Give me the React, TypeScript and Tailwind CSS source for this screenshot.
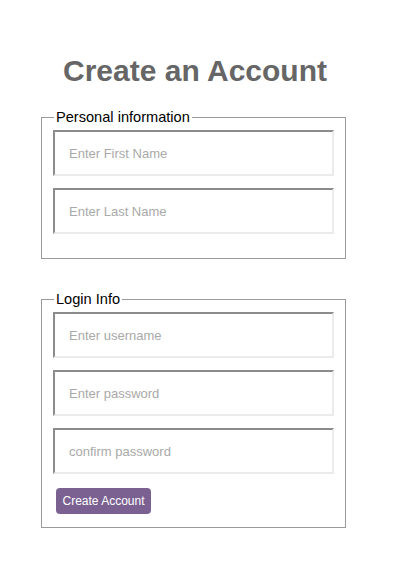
import React from "react";

const inputCls =
  "block w-[281px] h-[46px] box-border bg-white pl-[14px] pr-[10px] text-[13px] text-[#333] outline-none border-2 border-solid border-t-[#8c8c8c] border-l-[#8c8c8c] border-b-[#ebebeb] border-r-[#ebebeb] placeholder:text-[#a9a9a9] font-['Liberation_Sans',Arial,sans-serif]";

export default function App() {
  return (
    <div className="min-h-screen bg-white pt-[54px] font-['Liberation_Sans',Arial,sans-serif]">
      <div className="ml-[41px] w-[305px]">
        <h1 className="w-[308px] text-center text-[30px] font-bold leading-[34px] text-[#666666]">
          Create an Account
        </h1>

        <form className="mt-[21px]" onSubmit={(e) => e.preventDefault()}>
          <fieldset className="w-[305px] border border-solid border-[#9a9a9a] px-[11px] pt-[4px] pb-[24px]">
            <legend className="ml-[1px] px-[2px] text-[14.6px] leading-[17px] text-black">
              Personal information
            </legend>
            <div className="flex flex-col gap-[12px]">
              <input className={inputCls} placeholder="Enter First Name" />
              <input className={inputCls} placeholder="Enter Last Name" />
            </div>
          </fieldset>

          <fieldset className="mt-[32px] w-[305px] border border-solid border-[#9a9a9a] px-[11px] pt-[4px] pb-[13px]">
            <legend className="ml-[1px] px-[2px] text-[14.6px] leading-[17px] text-black">
              Login Info
            </legend>
            <div className="flex flex-col gap-[12px]">
              <input className={inputCls} placeholder="Enter username" />
              <input className={inputCls} type="password" placeholder="Enter password" />
              <input className={inputCls} type="password" placeholder="confirm password" />
            </div>
            <button
              type="submit"
              className="mt-[14px] ml-[3px] h-[26px] w-[95px] rounded-[4px] bg-[#7b6192] text-[12px] leading-[26px] text-white"
            >
              Create Account
            </button>
          </fieldset>
        </form>
      </div>
    </div>
  );
}
